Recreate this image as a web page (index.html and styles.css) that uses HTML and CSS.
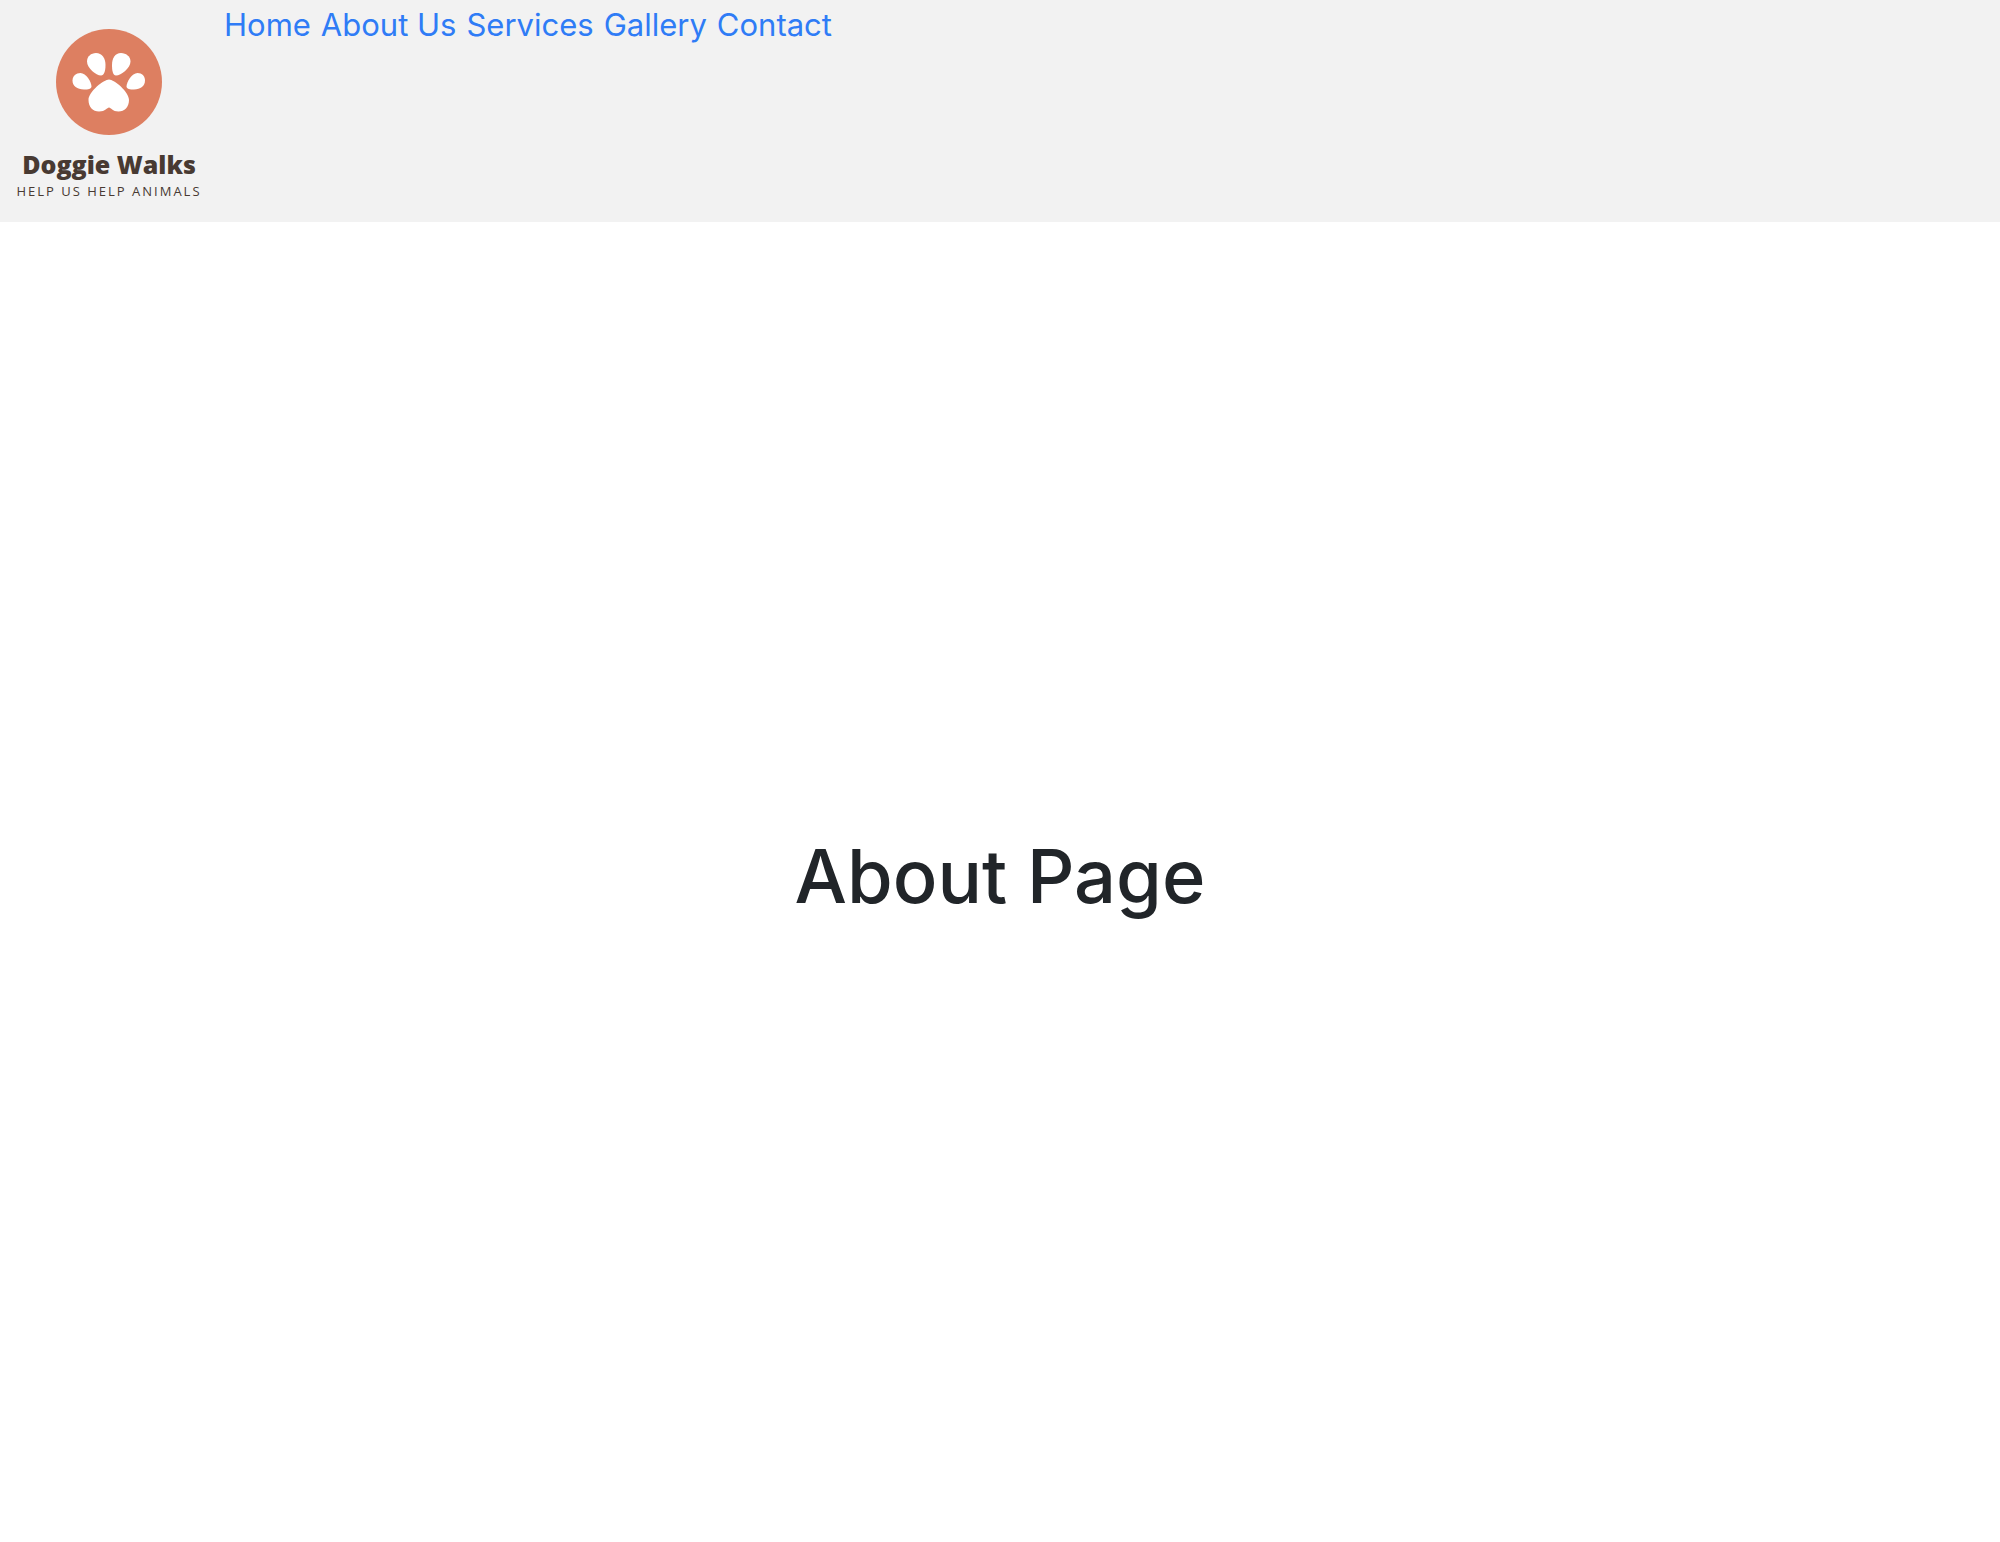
FILE: index.html
```html
<!DOCTYPE html>
<html lang="en">
<head>
  <meta charset="utf-8">
  <meta name="viewport" content="width=device-width, initial-scale=1">
  <title>Doggie Walks</title>
  <link rel="stylesheet" href="styles.css">
</head>
<body>
  <header class="site-header">
    <div class="brand">
      <svg class="brand-mark" viewBox="0 0 106 106" aria-hidden="true">
        <circle cx="53" cy="53" r="53" fill="#dd7f61"/>
        <g fill="#fff">
          <path d="M40 24C46 24 49.500 29 49.500 36C49.500 42 48 46.500 45 46.500C40 46.500 31 39 31 32.500C31 27.500 35 24 40 24Z"/>
          <path d="M65 24C59 24 56 29 56 36C56 42 57 46.500 60 46.500C65 46.500 74.500 39 74.500 32.500C74.500 27.500 70 24 65 24Z"/>
          <path d="M24.500 44C30 44 35.500 53 35.500 57.500C35.500 60 32 60.500 28 60.500C21 60.500 16.500 57 16.500 51.500C16.500 47 20 44 24.500 44Z"/>
          <path d="M81.500 44C76 44 70.500 53 70.500 57.500C70.500 60 74 60.500 78 60.500C84.500 60.500 89 57 89 51.500C89 47 86 44 81.500 44Z"/>
          <path d="M53 50.500C58 50.500 73 62.500 73 71C73 78 68.500 82.500 62.500 82.500C56.500 82.500 55 78.500 53 78.500C51 78.500 49.500 82.500 43 82.500C37 82.500 32.500 78 32.500 71C32.500 62.500 48 50.500 53 50.500Z"/>
        </g>
      </svg>
      <span class="brand-name">Doggie Walks</span>
      <span class="brand-tagline">HELP US HELP ANIMALS</span>
    </div>
    <nav class="site-nav">
      <a href="#home">Home</a>
      <a href="#about">About Us</a>
      <a href="#services">Services</a>
      <a href="#gallery">Gallery</a>
      <a href="#contact">Contact</a>
    </nav>
  </header>
  <main class="page">
    <h1 class="page-title">About Page</h1>
  </main>
</body>
</html>
```
FILE: styles.css
```css
* {
  box-sizing: border-box;
}

body {
  display: flex;
  flex-direction: column;
  min-height: 100vh;
  margin: 0;
  background: #fff;
  color: #212529;
  font-family: Inter, "Liberation Sans", sans-serif;
}

.site-header {
  display: flex;
  align-items: flex-start;
  background: #f2f2f2;
}

.brand {
  display: flex;
  flex-direction: column;
  align-items: center;
  width: 218px;
  margin-right: 6px;
  padding: 29px 0 22px;
  color: #483a32;
  white-space: nowrap;
}

.brand-mark {
  width: 106px;
  height: 106px;
}

.brand-name {
  margin-top: 13px;
  font-family: "Open Sans", sans-serif;
  font-size: 25px;
  font-weight: 800;
  line-height: 32px;
}

.brand-tagline {
  margin-top: 2px;
  font-family: "Open Sans", sans-serif;
  font-size: 13px;
  line-height: 18px;
  letter-spacing: 2px;
}

.site-nav {
  display: flex;
  flex-wrap: wrap;
  gap: 10px;
  font-size: 31px;
  line-height: 50px;
}

.site-nav a {
  color: #2f7cf6;
  text-decoration: none;
}

.page {
  display: flex;
  flex: 1;
  align-items: center;
  justify-content: center;
}

.page-title {
  margin: 0 0 12px;
  font-size: 74px;
  font-weight: 500;
  line-height: 96px;
}
```
